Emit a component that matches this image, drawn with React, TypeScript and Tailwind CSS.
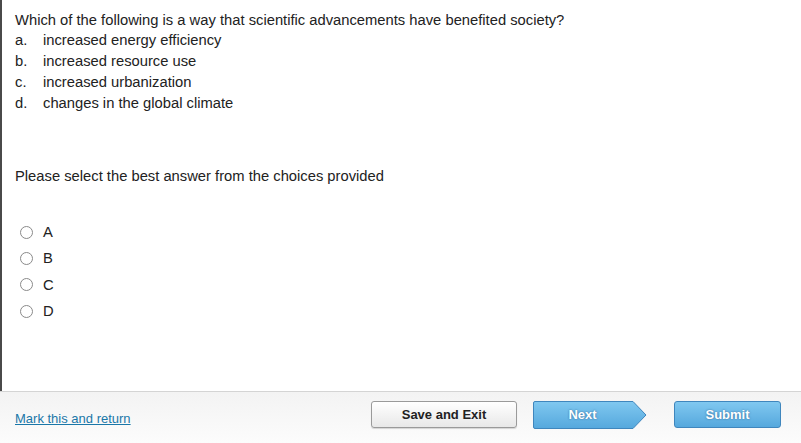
import { useState } from 'react';

const choices = [
  { key: 'a.', text: 'increased energy efficiency' },
  { key: 'b.', text: 'increased resource use' },
  { key: 'c.', text: 'increased urbanization' },
  { key: 'd.', text: 'changes in the global climate' },
];

export default function App() {
  const [picked, setPicked] = useState<string | null>(null);

  return (
    <div className="flex flex-col h-[443px] w-[801px] bg-white text-[#222] font-['Liberation_Sans',Arial,sans-serif] overflow-hidden">
      {/* Question area */}
      <main className="flex-1 border-l-2 border-[#4a4a4a] pl-[13px] pt-[11px]">
        <p className="text-[14.75px] leading-[18px]">
          Which of the following is a way that scientific advancements have benefited society?
        </p>
        <ol className="mt-[1px]">
          {choices.map((c) => (
            <li key={c.key} className="flex text-[14.75px] leading-[21px]">
              <span className="w-[28px]">{c.key}</span>
              <span>{c.text}</span>
            </li>
          ))}
        </ol>

        <p className="mt-[53px] text-[14.75px] leading-[18px]">Please select the best answer from the choices provided</p>

        <div className="mt-[38px] flex flex-col gap-[8.4px]">
          {['A', 'B', 'C', 'D'].map((l) => (
            <label key={l} className="flex items-center h-[18px] cursor-pointer">
              <span className="ml-[5px] w-[13px] h-[13px] rounded-full border border-[#8a8a8a] bg-white flex items-center justify-center">
                {picked === l && <span className="w-[7px] h-[7px] rounded-full bg-[#333]" />}
              </span>
              <input type="radio" name="ans" className="hidden" onChange={() => setPicked(l)} />
              <span className="ml-[10px] text-[14.75px] leading-[18px]">{l}</span>
            </label>
          ))}
        </div>
      </main>

      {/* Footer */}
      <footer className="h-[52px] border-t border-[#d4d4d4] bg-gradient-to-b from-[#f3f3f3] to-[#fcfcfc] flex items-start pt-[9px] pl-[15px] pr-[20px]">
        <a href="#" className="mt-[8px] text-[13px] text-[#1a77a8] underline">Mark this and return</a>

        <button className="ml-auto w-[146px] h-[27px] rounded-[3px] border border-[#9a9a9a] bg-gradient-to-b from-white to-[#e8e8e8] text-[13px] font-bold text-[#222] shadow-[0_1px_1px_rgba(0,0,0,0.15)]">
          Save and Exit
        </button>

        <button className="ml-[15px] relative h-[28px] w-[115px] flex items-center">
          <svg className="absolute inset-0" width="115" height="28" viewBox="0 0 115 28">
            <defs>
              <linearGradient id="ng" x1="0" y1="0" x2="0" y2="1">
                <stop offset="0" stopColor="#80c8f0" />
                <stop offset="1" stopColor="#55a8dd" />
              </linearGradient>
            </defs>
            <path d="M1.5 2 Q1.5 0.5 3 0.5 L101 0.5 L114 14 L101 27.5 L3 27.5 Q1.5 27.5 1.5 26 Z" fill="url(#ng)" stroke="#3f86bd" />
          </svg>
          <span className="relative w-[101px] text-center text-[13px] font-bold text-white [text-shadow:0_0_2px_rgba(30,80,130,0.8)]">Next</span>
        </button>

        <button className="ml-[27px] w-[107px] h-[27px] rounded-[3px] border border-[#3f86bd] bg-gradient-to-b from-[#80c8f0] to-[#55a8dd] text-[13px] font-bold text-white [text-shadow:0_0_2px_rgba(30,80,130,0.8)]">
          Submit
        </button>
      </footer>
    </div>
  );
}
